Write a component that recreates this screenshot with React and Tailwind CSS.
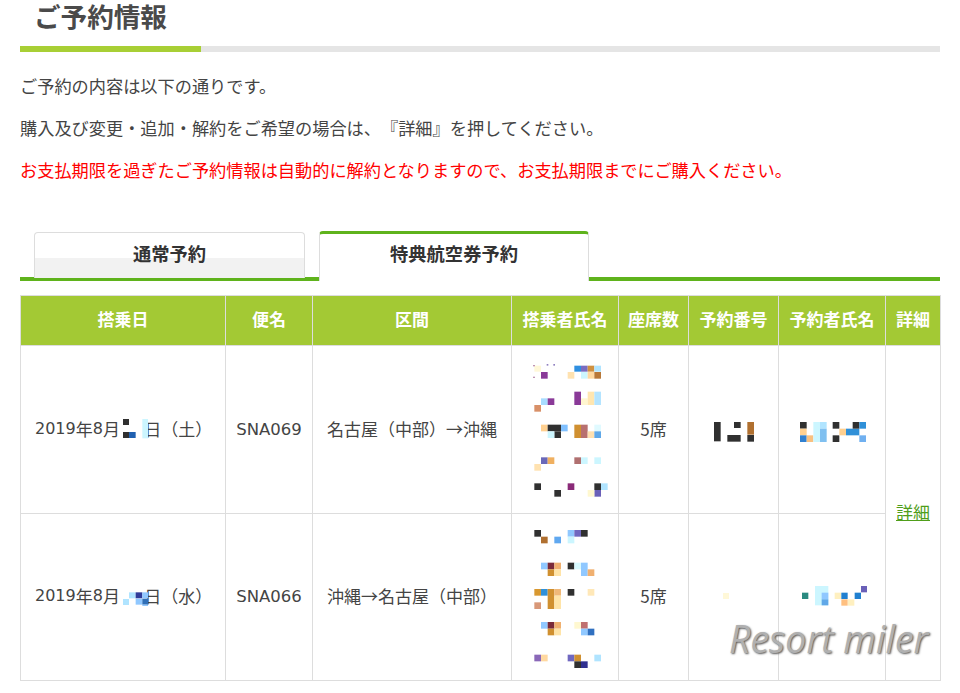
import React from 'react';

const DK = '#303030';

// mosaic blocks are [x, y, w, h, color], measured on a 3x grid
const passengers1 = [
  [70,47,20,18,'#fff8d8'],[67,45,4,4,'#a06090'],[107,42,5,5,'#9080c0'],[127,42,5,5,'#9080c0'],[190,47,20,18,'#2f8fe0'],[210,47,20,18,'#7a6cc0'],[230,47,20,18,'#d09040'],[250,47,20,18,'#b0e4ff'],
  [90,66,20,20,'#8a3a98'],[170,66,20,20,'#ffe2b0'],[210,66,20,20,'#ccf6ff'],[230,66,20,20,'#ffd8a0'],[250,66,20,20,'#b87838'],[67,80,4,4,'#a06090'],
  [190,125,20,40,'#8a3a98'],[210,145,20,20,'#fff6d0'],[230,125,20,40,'#ffe6b0'],[250,125,20,40,'#b4e4ff'],[90,145,20,20,'#a8dcff'],[110,145,20,20,'#8a3a98'],[70,165,20,20,'#d89068'],
  [90,224,20,20,'#ffd090'],[110,224,40,20,DK],[130,244,20,20,DK],[150,224,20,20,'#80c0ff'],[110,244,20,20,'#ccf6ff'],[190,224,20,40,'#d09030'],[210,224,20,40,'#b87070'],[230,244,20,20,'#ffe0b0'],[250,224,20,20,'#e0faff'],[250,244,20,20,'#60a8e8'],
  [90,322,20,20,'#6a68b8'],[110,322,20,20,'#f0b060'],[70,342,20,20,'#ffe2b0'],[190,322,20,20,'#b07070'],[210,322,20,20,'#ccf6ff'],[250,322,20,20,'#ccf6ff'],
  [70,400,20,20,DK],[130,420,20,20,DK],[170,400,20,20,'#8a2a78'],[250,400,20,20,DK],[270,400,20,20,'#b0e4ff'],[250,420,20,20,'#6a60b8'],[230,420,20,20,'#fff8d0'],
];

const passengers2 = [
  [70,45,20,20,DK],[90,65,20,20,'#b07030'],[130,65,20,20,'#60a8f0'],[170,45,20,20,'#90c8ff'],[190,45,20,20,'#7068c0'],[210,45,20,20,DK],[170,65,20,20,'#ccf6ff'],
  [90,143,20,20,'#90c8ff'],[110,143,20,20,'#7a2a3a'],[130,143,20,20,'#f0b070'],[110,163,20,20,'#d09030'],[130,163,20,20,'#ffe4a8'],[170,143,20,20,DK],[190,143,20,20,'#d8faff'],[210,143,20,40,'#90c8ff'],[230,163,20,20,'#f0b070'],
  [70,222,20,20,'#d89830'],[90,222,20,20,'#3090d8'],[110,222,20,60,'#d09030'],[130,222,20,20,'#f0b878'],[130,242,20,40,'#ffe4a8'],[70,262,20,20,'#d89878'],[170,222,20,20,DK],[230,222,20,20,'#ffe8b8'],
  [90,321,20,20,'#90c8ff'],[110,321,20,20,'#7a2a3a'],[130,321,20,20,'#f0b070'],[110,341,20,20,'#d09030'],[130,341,20,20,'#ffe4a8'],[190,321,20,20,'#fff8d0'],[210,321,20,20,'#c07070'],[210,341,20,20,'#90c8ff'],[230,341,20,20,'#3070c0'],
  [70,419,20,20,'#8a68b8'],[90,419,20,20,'#ffd8a0'],[170,419,20,20,'#7068c0'],[190,419,20,20,'#d09030'],[190,439,20,20,DK],[210,439,20,20,'#303090'],[250,419,20,20,'#b0e4ff'],
];

const resNo1 = [[0,0,20,58,DK],[60,0,20,18,DK],[40,39,40,20,DK],[100,0,20,38,'#b07030'],[100,39,20,20,DK]];
const resName1 = [
  [0,0,20,20,DK],[0,20,20,20,'#ffd090'],[0,40,20,20,'#3080d0'],[20,40,20,20,'#f8c080'],[40,0,20,60,'#ccf6ff'],[60,0,20,20,'#b0e4ff'],[60,20,20,40,'#80c0f0'],
  [98,0,20,20,DK],[98,40,20,20,DK],[118,20,20,20,'#ffd090'],[138,20,40,20,'#3090d8'],[158,0,20,20,DK],[178,0,20,20,'#3090d8'],[178,40,20,20,'#70b0f0'],
];
const resNo2 = [[0,0,18,18,'#fff8d8']];
const resName2 = [
  [0,20,19,19,'#2a8a80'],[39,0,40,58,'#ccf6ff'],[59,20,20,20,'#90c8ff'],[59,40,20,18,'#60a8e8'],[98,20,19,19,'#fff0c0'],[118,20,19,19,'#2080d0'],[118,40,19,19,'#ffc080'],[138,40,19,19,'#fff0c0'],[158,20,19,19,'#2080d0'],[177,0,19,19,'#6a60b8'],
];
const date1 = [[0,0,18,18,DK],[0,39,18,18,DK],[18,39,20,18,'#2060b0'],[58,0,18,58,'#ccf6ff']];
const date2 = [[0,39,18,18,'#b0e4ff'],[18,19,20,18,'#b0e4ff'],[38,19,20,18,'#303c98'],[58,19,18,18,'#90c8ff'],[38,38,20,18,'#90c8ff'],[58,38,18,18,'#3070b8'],[58,56,18,4,'#90c8ff']];

function Mosaic({ blocks, w, h, className }) {
  return (
    <svg width={w / 3} height={h / 3} viewBox={`0 0 ${w} ${h}`} className={className}>
      {blocks.map(([x, y, bw, bh, fill], i) => (
        <rect key={i} x={x} y={y} width={bw} height={bh} fill={fill} />
      ))}
    </svg>
  );
}

function DateText({ blocks, day }) {
  return (
    <span className="ml-[14px] flex items-center">
      <span className="text-[16px] font-['DejaVu_Sans',sans-serif]">2019</span>年
      <span className="text-[16px] font-['DejaVu_Sans',sans-serif]">8</span>月
      <Mosaic blocks={blocks} w={76} h={60} className="relative z-10 ml-[3px] shrink-0" />
      <span className="-ml-[4px]">日（{day}）</span>
    </span>
  );
}

const th = 'border border-[#ddd] font-bold text-white text-[17px] p-0 pb-[3px] text-center';
const td = 'border border-[#ddd] text-center p-0 pb-[2px] text-[#444]';
const tdMosaic = 'border border-[#ddd] p-0';
const flight = "text-[16.5px] font-['DejaVu_Sans',sans-serif]";

export default function App() {
  return (
    <div className="relative h-[693px] w-[960px] overflow-hidden bg-white px-5 text-[17px] text-[#444] font-['Noto_Sans_CJK_JP','Noto_Sans',sans-serif]">
      <h2 className="h-[46px] pl-[14px] text-[26.6px] font-bold leading-[32px] text-[#4a4a4a]">ご予約情報</h2>
      <div className="flex h-[6px] bg-[#e5e5e5]">
        <div className="w-[181px] bg-[#a8cf35]" />
      </div>

      <div className="text-[17.2px] [text-spacing-trim:space-all]">
        <p className="mt-[21px] h-[42px] leading-[26px]">ご予約の内容は以下の通りです。</p>
        <p className="h-[42px] leading-[26px]">購入及び変更・追加・解約をご希望の場合は、『詳細』を押してください。</p>
        <p className="h-[42px] leading-[26px] text-[#ff0000]">お支払期限を過ぎたご予約情報は自動的に解約となりますので、お支払期限までにご購入ください。</p>
      </div>

      <div className="mt-[32px] flex h-[50px] items-start gap-[14px] border-b-4 border-[#5fb31c] pl-[14px] text-[18.3px]">
        <div className="mt-px flex h-[46px] w-[271px] items-center justify-center rounded-t border border-b-0 border-[#ddd] bg-[linear-gradient(#fff_55%,#f2f2f2_55%)] pb-[3px] font-bold text-[#333]">
          通常予約
        </div>
        <div className="relative flex h-[50px] w-[270px] items-center justify-center rounded-t border-x border-t-[3px] border-x-[#ddd] border-t-[#5fb31c] bg-white pb-[7px] font-bold text-[#333]">
          特典航空券予約
        </div>
      </div>

      <table className="mt-[14px] w-[920px] table-fixed border-collapse">
        <colgroup>
          <col className="w-[205px]" />
          <col className="w-[87px]" />
          <col className="w-[199px]" />
          <col className="w-[107px]" />
          <col className="w-[70px]" />
          <col className="w-[90px]" />
          <col className="w-[107px]" />
          <col className="w-[55px]" />
        </colgroup>
        <thead>
          <tr className="h-[50px] bg-[#a3c934]">
            <th className={th}>搭乗日</th>
            <th className={th}>便名</th>
            <th className={th}>区間</th>
            <th className={th}>搭乗者氏名</th>
            <th className={th}>座席数</th>
            <th className={th}>予約番号</th>
            <th className={th}>予約者氏名</th>
            <th className={th}>詳細</th>
          </tr>
        </thead>
        <tbody>
          <tr className="h-[168px]">
            <td className={td}>
              <DateText blocks={date1} day="土" />
            </td>
            <td className={td}><span className={flight}>SNA069</span></td>
            <td className={td}>名古屋（中部）→沖縄</td>
            <td className={tdMosaic}>
              <Mosaic blocks={passengers1} w={321} h={495} className="-ml-px mt-[3px] -mb-[2px]" />
            </td>
            <td className={td}>5席</td>
            <td className={tdMosaic}>
              <Mosaic blocks={resNo1} w={120} h={60} className="ml-[25px] mt-[4px]" />
            </td>
            <td className={tdMosaic}>
              <Mosaic blocks={resName1} w={198} h={60} className="ml-[21px] mt-[4px]" />
            </td>
            <td rowSpan={2} className={td}>
              <a href="#" className="text-[#4f9e1a] underline">詳細</a>
            </td>
          </tr>
          <tr className="h-[167px]">
            <td className={td}>
              <DateText blocks={date2} day="水" />
            </td>
            <td className={td}><span className={flight}>SNA066</span></td>
            <td className={td}>沖縄→名古屋（中部）</td>
            <td className={tdMosaic}>
              <Mosaic blocks={passengers2} w={321} h={495} className="-ml-px" />
            </td>
            <td className={td}>5席</td>
            <td className={tdMosaic}>
              <Mosaic blocks={resNo2} w={18} h={18} className="ml-[34px] -mt-[3px]" />
            </td>
            <td className={tdMosaic}>
              <Mosaic blocks={resName2} w={196} h={60} className="ml-[23px] -mt-[2px]" />
            </td>
          </tr>
        </tbody>
      </table>

      <div className="absolute left-[729px] top-[615px] text-[37.5px] italic leading-[48px] text-[#b0b0b0] font-['Open_Sans',sans-serif] [text-shadow:1px_1px_2px_#555]">
        Resort miler
      </div>
    </div>
  );
}
